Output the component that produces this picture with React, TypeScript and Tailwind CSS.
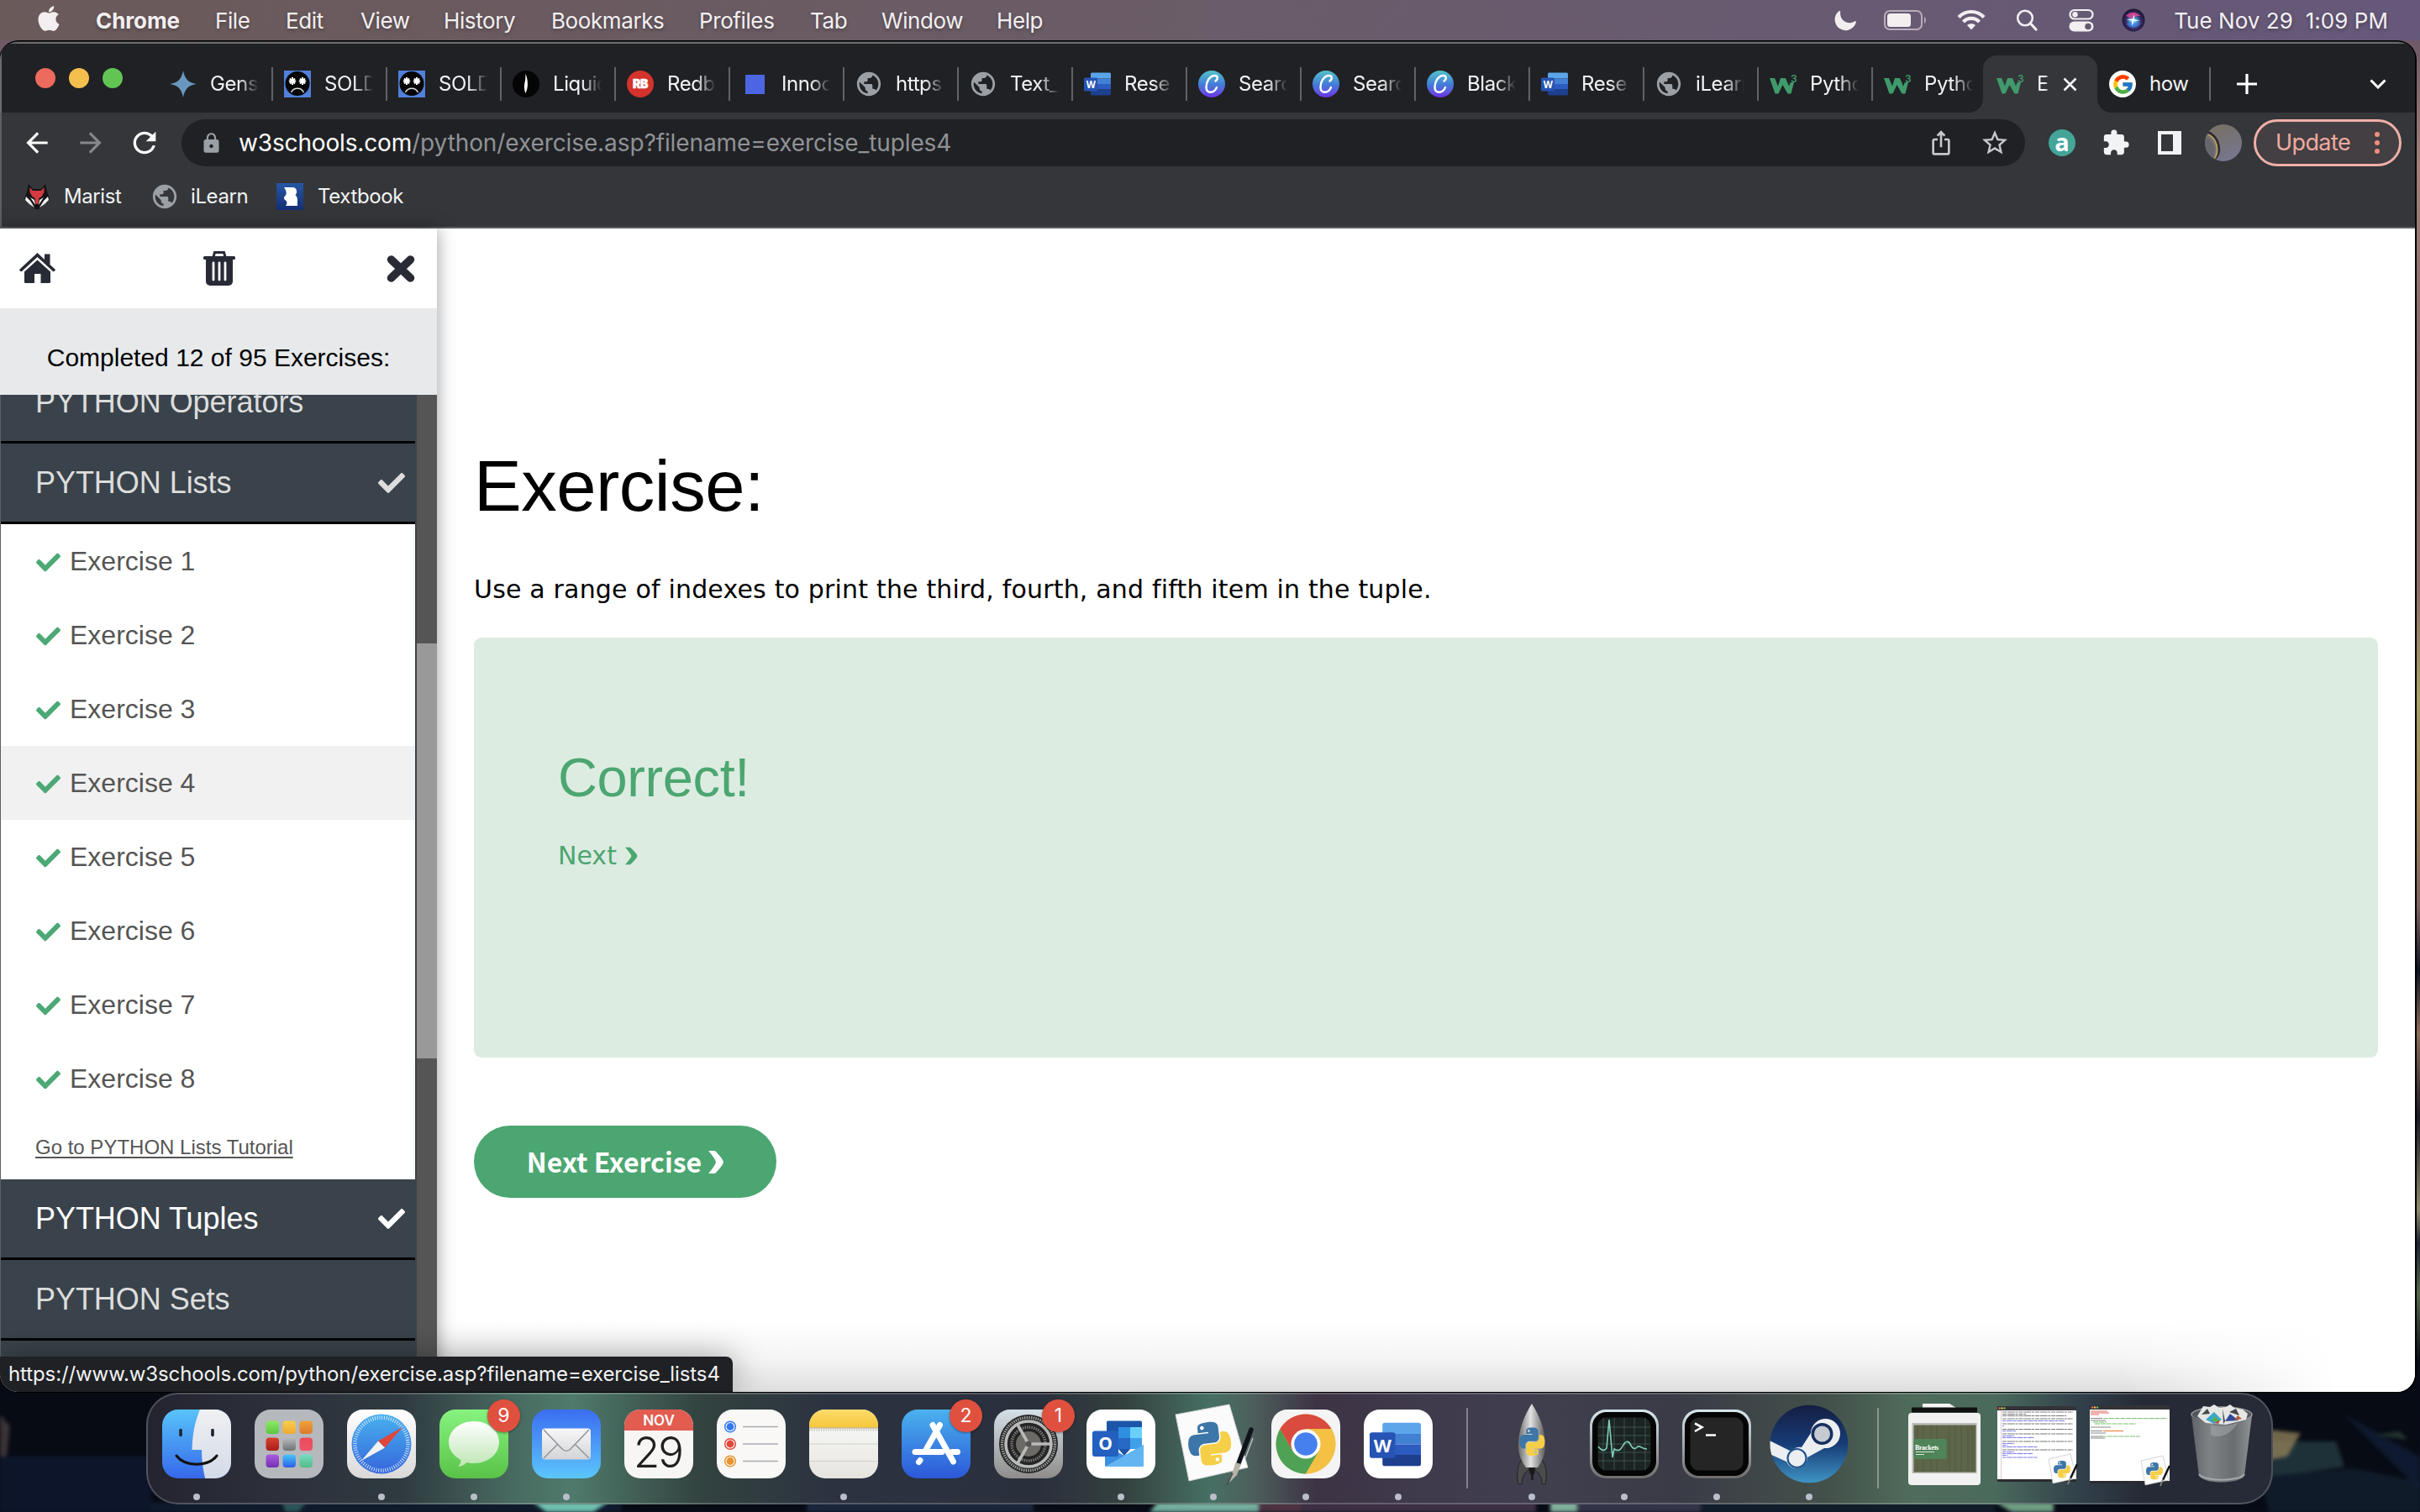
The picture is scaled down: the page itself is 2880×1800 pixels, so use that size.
import React from 'react';
import { FaApple, FaCheck } from 'react-icons/fa';
import { IoMoon } from 'react-icons/io5';
import { FcGoogle } from 'react-icons/fc';
import {
  MdArrowBack,
  MdArrowForward,
  MdExtension,
  MdIosShare,
  MdLock,
  MdPublic,
  MdRefresh,
  MdStarBorder,
} from 'react-icons/md';

/* ---------- menu bar ---------- */

const menus = [
  { label: 'File', cls: 'w-[84px]' },
  { label: 'Edit', cls: 'w-[89px]' },
  { label: 'View', cls: 'w-[99px]' },
  { label: 'History', cls: 'w-[128px]' },
  { label: 'Bookmarks', cls: 'w-[176px]' },
  { label: 'Profiles', cls: 'w-[132px]' },
  { label: 'Tab', cls: 'w-[85px]' },
  { label: 'Window', cls: 'w-[137px]' },
  { label: 'Help', cls: 'w-[80px]' },
];

function MenuBar() {
  return (
    <header className="relative flex h-12 shrink-0 items-center bg-linear-to-r from-[#6b5a5a] via-[#6a5c68] to-[#65587a] text-[26px] tracking-[-0.4px] text-[#f3eff1] [text-shadow:0_2px_4px_rgba(0,0,0,0.3)]">
      <FaApple className="ml-[41px] -mt-1 size-[34px]" />
      <span className="ml-[39px] w-[142px] font-bold tracking-[-0.1px]">Chrome</span>
      {menus.map((m) => (
        <span key={m.label} className={m.cls}>
          {m.label}
        </span>
      ))}
      <div className="ml-auto flex items-center pr-[38px]">
        <IoMoon className="size-[28px] -rotate-12" />
        <svg className="ml-[32px] h-[26px] w-[52px]" viewBox="0 0 52 26" fill="none">
          <rect x="1" y="2" width="44" height="22" rx="6" stroke="#b7aebb" strokeWidth="2" />
          <rect x="4" y="5" width="28" height="16" rx="3.5" fill="#f3eff1" />
          <path d="M48 9c2.5 1 2.5 7 0 8z" fill="#b7aebb" />
        </svg>
        <svg className="ml-[35px] h-[26px] w-[34px]" viewBox="0 0 34 26" fill="none" stroke="#f3eff1" strokeWidth="4.2">
          <path d="M2 9.500C10 .8 24 .8 32 9.500" />
          <path d="M7.500 15C12.500 9.500 21.500 9.500 26.500 15" />
          <path d="M17 24.500l-5-5.400c2.600-2.600 7.400-2.600 10 0z" fill="#f3eff1" stroke="none" />
        </svg>
        <svg className="ml-[36px] h-[26px] w-[26px]" viewBox="0 0 26 26" fill="none" stroke="#f3eff1" strokeWidth="2.600" strokeLinecap="round">
          <circle cx="11" cy="10.500" r="8.800" />
          <path d="M17.500 17l6.500 7" strokeWidth="3.200" />
        </svg>
        <svg className="ml-[37px] h-[28px] w-[30px]" viewBox="0 0 30 28" fill="none">
          <rect x="1.500" y="2" width="27" height="10.500" rx="5.250" stroke="#f3eff1" strokeWidth="2.200" />
          <circle cx="7.500" cy="7.250" r="3.200" fill="#f3eff1" />
          <rect x="0.500" y="15.500" width="29" height="12" rx="6" fill="#f3eff1" />
          <circle cx="23" cy="21.500" r="3.800" fill="#645a70" />
        </svg>
        <svg className="ml-[33px] h-[28px] w-[28px]" viewBox="0 0 28 28">
          <defs>
            <radialGradient id="siri" cx="0.5" cy="0.55" r="0.55">
              <stop offset="0" stopColor="#d8fbff" />
              <stop offset="0.25" stopColor="#4aa3d6" />
              <stop offset="0.6" stopColor="#3a2a64" />
              <stop offset="1" stopColor="#17132c" />
            </radialGradient>
          </defs>
          <circle cx="14" cy="14" r="13.500" fill="url(#siri)" />
          <path d="M5 9c4-5 13-6 17 0-5 0-8 1-9 5-2-3-5-4-8-5z" fill="#e0489a" opacity=".85" />
          <path d="M5 18c4 1 6-1 9-4 1 3 4 5 9 3-4 7-13 8-18 1z" fill="#3d7df0" opacity=".6" />
          <path d="M15 7l0 6 7 1.500-7 .5L12 21l0-6-6-2 7-.5z" fill="#e6ffff" />
        </svg>
        <span className="ml-[34px] whitespace-pre tracking-[0.05px]">Tue Nov 29  1:09 PM</span>
      </div>
    </header>
  );
}

/* ---------- favicons ---------- */

function WordMark({ className }: { className: string }) {
  return (
    <svg className={className} viewBox="0 0 32 32">
      <path d="M8 4a1.500 1.500 0 011.500-1.500h21A1.500 1.500 0 0132 4v5.500H8z" fill="#5ca5ea" />
      <path d="M8 9.500h24V16H8z" fill="#4280d4" />
      <path d="M8 16h24v6.500H8z" fill="#2c5cc0" />
      <path d="M8 22.500h24V28a1.500 1.500 0 01-1.500 1.500h-21A1.500 1.500 0 018 28z" fill="#1d3f8e" />
      <rect x="0" y="8.500" width="16" height="16" rx="1.500" fill="#2653b4" />
      <text x="8" y="20.800" textAnchor="middle" className="font-['Open_Sans'] text-[11.5px] font-bold" fill="#fff">
        W
      </text>
    </svg>
  );
}

function W3Mark() {
  return (
    <svg className="size-8" viewBox="0 0 32 32">
      <path d="M0 9h6l4 9.500L13 9h6l4 9.500 2-4.500h4l-3.500 13.500h-4L15.500 17 10.500 27.500h-4z" fill="#3f9b6b" />
      <text x="25" y="14" className="font-['Inter'] text-[12px] font-semibold" fill="#3f9b6b">
        3
      </text>
    </svg>
  );
}

function SadFace() {
  return (
    <svg className="size-8" viewBox="0 0 32 32">
      <rect width="32" height="32" fill="#5080da" />
      <circle cx="16" cy="15.500" r="14.500" fill="#050505" />
      <g stroke="#fff" strokeWidth="2">
        <path d="M10 8v9M5.800 12.500h8.400M7 9.500l6 6M13 9.500l-6 6" />
        <path d="M22 8v9M17.800 12.500h8.400M19 9.500l6 6M25 9.500l-6 6" />
      </g>
      <path d="M8.500 26c3-6.500 12-6.500 15 0" stroke="#ddd" strokeWidth="1.500" fill="none" />
    </svg>
  );
}

function CanvaMark() {
  return (
    <span className="flex size-8 items-center justify-center rounded-full bg-linear-to-b from-[#56c2c8] via-[#4478d8] via-55% to-[#6a2be6]">
      <svg className="size-8" viewBox="0 0 32 32" fill="none" stroke="#fff" strokeWidth="2.400" strokeLinecap="round">
        <path d="M20.500 12.500c3.500-2.500 3-6.500-1-6.500-5.500 0-10 7-10 13.500 0 8.500 9.500 8 12.500.5" />
      </svg>
    </span>
  );
}

function Favicon({ kind }: { kind: string }) {
  switch (kind) {
    case 'star':
      return (
        <svg className="size-8" viewBox="0 0 32 32">
          <path d="M16 0c2 10 6 14.500 16 16-10 1.500-14 6-16 16C14 22 10 17.500 0 16 10 14.500 14 10 16 0z" fill="#6a97bf" />
        </svg>
      );
    case 'sad':
      return <SadFace />;
    case 'death':
      return (
        <svg className="size-8" viewBox="0 0 32 32">
          <circle cx="16" cy="16" r="16" fill="#050506" />
          <path d="M15.500 4c3 7 3.500 16 0 23-2.500-6-1.500-11-.5-15 .5-3 .2-5 .5-8z" fill="#fff" />
        </svg>
      );
    case 'redbubble':
      return (
        <svg className="size-8" viewBox="0 0 32 32">
          <circle cx="16" cy="16" r="16" fill="#d4322c" />
          <text x="16" y="21" textAnchor="middle" className="font-['Inter'] text-[14px] font-black" fill="#fff" stroke="#fff" strokeWidth=".5">
            RB
          </text>
        </svg>
      );
    case 'square':
      return (
        <span className="flex size-8 items-center justify-center">
          <span className="size-[23px] bg-[#4c65e2]" />
        </span>
      );
    case 'globe':
      return <MdPublic className="size-[34px] -ml-px -mr-px text-[#9aa0a6]" />;
    case 'word':
      return <WordMark className="size-8" />;
    case 'canva':
      return <CanvaMark />;
    case 'google':
      return (
        <span className="flex size-8 items-center justify-center rounded-full bg-white">
          <FcGoogle className="size-[27px]" />
        </span>
      );
    default:
      return <W3Mark />;
  }
}

/* ---------- tab strip ---------- */

const tabs = [
  { icon: 'star', label: 'Gens' },
  { icon: 'sad', label: 'SOLD' },
  { icon: 'sad', label: 'SOLD' },
  { icon: 'death', label: 'Liquid' },
  { icon: 'redbubble', label: 'Redb' },
  { icon: 'square', label: 'Innoc' },
  { icon: 'globe', label: 'https' },
  { icon: 'globe', label: 'Text_' },
  { icon: 'word', label: 'Rese' },
  { icon: 'canva', label: 'Searc' },
  { icon: 'canva', label: 'Searc' },
  { icon: 'canva', label: 'Black' },
  { icon: 'word', label: 'Rese' },
  { icon: 'globe', label: 'iLearn' },
  { icon: 'w3', label: 'Pytho' },
  { icon: 'w3', label: 'Pytho' },
];

const fade = '[mask-image:linear-gradient(to_right,black_60%,transparent)]';

function TabStrip() {
  return (
    <div className="flex h-[82px] items-end bg-[#202124] text-[24px] tracking-[-0.4px] text-[#f1f3f4]">
      <div className="ml-[40px] mb-[29px] flex h-6 w-[147px] gap-4">
        <i className="size-6 rounded-full bg-[#ed6a5e]" />
        <i className="size-6 rounded-full bg-[#f4bf4f]" />
        <i className="size-6 rounded-full bg-[#61c554]" />
      </div>
      {tabs.map((t, i) => (
        <div key={i} className="flex h-[68px] w-[136px] shrink-0 items-center pl-[13px]">
          <Favicon kind={t.icon} />
          <span className={`ml-4 w-[58px] overflow-hidden whitespace-nowrap ${fade}`}>{t.label}</span>
          {i < 15 && <i className="ml-auto h-10 w-0.5 bg-[#5f6368]" />}
        </div>
      ))}
      <div className="relative -ml-[5px] flex h-[68px] w-[136px] shrink-0 items-center rounded-t-[16px] bg-[#35363a] pl-4">
        <i className="absolute -left-4 bottom-0 size-4 bg-[radial-gradient(circle_at_0_0,#202124_15.5px,#35363a_16px)]" />
        <i className="absolute -right-4 bottom-0 size-4 bg-[radial-gradient(circle_at_100%_0,#202124_15.5px,#35363a_16px)]" />
        <W3Mark />
        <span className={`ml-4 w-[16px] overflow-hidden ${fade}`}>E</span>
        <svg className="ml-[15px] size-[17px]" viewBox="0 0 17 17" stroke="#f1f3f4" strokeWidth="2.600">
          <path d="M1.500 1.500l14 14M15.500 1.500l-14 14" />
        </svg>
      </div>
      <div className="flex h-[68px] w-[135px] shrink-0 items-center pl-[14px]">
        <Favicon kind="google" />
        <span className="ml-4 w-[58px] whitespace-nowrap">how</span>
        <i className="ml-auto h-10 w-0.5 bg-[#5f6368]" />
      </div>
      <svg className="mb-[22px] ml-[31px] size-6" viewBox="0 0 24 24" stroke="#fff" strokeWidth="3.200">
        <path d="M12 0v24M0 12h24" />
      </svg>
      <svg className="mb-[28px] ml-[134px] h-[12px] w-[20px]" viewBox="0 0 20 12" stroke="#fff" strokeWidth="3" fill="none">
        <path d="M1.500 1.500L10 10l8.500-8.500" />
      </svg>
    </div>
  );
}

/* ---------- toolbar and bookmarks ---------- */

function Toolbar() {
  return (
    <div className="flex h-[72px] items-center bg-[#35363a]">
      <MdArrowBack className="ml-[23px] size-[38px] text-white" />
      <MdArrowForward className="ml-[26px] size-[38px] text-[#86888c]" />
      <MdRefresh className="ml-[25px] size-[40px] text-white" />
      <div className="ml-[24px] flex h-14 w-[2194px] shrink-0 items-center rounded-full bg-[#202124] pl-[22px] text-[28px]">
        <MdLock className="size-[27px] text-[#9aa0a6]" />
        <span className="ml-[19px] whitespace-nowrap tracking-[-0.15px] text-white">w3schools.com</span>
        <span className="whitespace-nowrap tracking-[-0.1px] text-[#8f9296]">/python/exercise.asp?filename=exercise_tuples4</span>
        <MdIosShare className="ml-auto size-[32px] text-[#c6c9cc]" />
        <MdStarBorder className="ml-[30px] mr-[18px] size-[36px] text-[#c6c9cc]" />
      </div>
      <span className="ml-[28px] flex size-8 shrink-0 items-center justify-center rounded-full bg-[#44a598] pb-1 font-['Open_Sans'] text-[29px] leading-none font-bold text-white">
        a
      </span>
      <MdExtension className="ml-[31px] size-[34px] shrink-0 text-[#f1f3f4]" />
      <svg className="ml-[33px] h-7 w-7 shrink-0" viewBox="0 0 28 28">
        <path fillRule="evenodd" d="M0 0h28v28H0zM4 4v20h14V4z" fill="#f1f3f4" />
      </svg>
      <svg className="ml-[28px] size-11 shrink-0" viewBox="0 0 44 44">
        <defs>
          <linearGradient id="av" x1="0" y1="0" x2="0.400" y2="1">
            <stop offset="0" stopColor="#77705f" />
            <stop offset="1" stopColor="#77758c" />
          </linearGradient>
          <clipPath id="avc">
            <circle cx="22" cy="22" r="22" />
          </clipPath>
        </defs>
        <g clipPath="url(#avc)">
          <rect width="44" height="44" fill="url(#av)" />
          <path d="M0 16c10 0 16 14 8 28H0z" fill="#66676c" />
          <path d="M3 9c14 6 18 24 8 33" fill="none" stroke="#2a2a32" strokeWidth="3" />
          <path d="M4 12c10 5 15 20 6 31" fill="none" stroke="#b9a05e" strokeWidth="1.800" />
        </g>
      </svg>
      <div className="ml-[14px] flex h-14 w-[176px] shrink-0 items-center rounded-full border-[3px] border-[#efb0a7] bg-[#433f42] pl-[23px] text-[27px] tracking-[-0.6px] text-[#f0aaa1]">
        <span className="w-[118px]">Update</span>
        <span className="flex flex-col gap-[4px]">
          <i className="size-[6px] rounded-full bg-[#ee8f80]" />
          <i className="size-[6px] rounded-full bg-[#ee8f80]" />
          <i className="size-[6px] rounded-full bg-[#ee8f80]" />
        </span>
      </div>
    </div>
  );
}

function Bookmarks() {
  return (
    <div className="flex h-[66px] items-center border-b-2 border-[#5c5e63] bg-[#35363a] pb-[8px] text-[24px] tracking-[-0.4px] text-[#f1f3f4]">
      <svg className="ml-[26px] h-[30px] w-8" viewBox="0 0 32 30">
        <path d="M6 0l5 6h10l5-6 2 9 3 9-6 2-3 5-4 5h-4l-4-5-3-5-6-2 3-9z" fill="#141414" />
        <path d="M3 15l5 5 5 8-6-4-5-5zM29 15l-5 5-5 8 6-4 5-5z" fill="#f5f5f5" />
        <path d="M7.500 4l3.500 4h10l3.500-4v6l-3 5-3 2-1 7h-3l-1-7-3-2-3-5z" fill="#d43a40" />
        <path d="M8 16l5 3 1 6zM24 16l-5 3-1 6z" fill="#e9e9e9" />
      </svg>
      <span className="ml-[16px] w-[103px]">Marist</span>
      <MdPublic className="size-[34px] text-[#9aa0a6]" />
      <span className="ml-[14px] w-[102px]">iLearn</span>
      <svg className="size-8" viewBox="0 0 32 32">
        <defs>
          <linearGradient id="tb" x1="0" y1="0" x2="0" y2="1">
            <stop offset="0" stopColor="#2657a4" />
            <stop offset="1" stopColor="#142f73" />
          </linearGradient>
        </defs>
        <rect width="32" height="32" fill="url(#tb)" />
        <path d="M9 5h11c5 1 5 7 2.500 9 3 3 2.500 6 2.500 13H11c2.500-3 1.500-6-1-7-1.500-2-1.500-3 .5-5 2-2 1.500-6-1.500-10z" fill="#fff" />
      </svg>
      <span className="ml-[17px]">Textbook</span>
    </div>
  );
}

/* ---------- sidebar ---------- */

const heading =
  'flex h-24 w-[493px] shrink-0 items-center justify-between border-b-[3px] border-black bg-[#3a434b] pl-[41px] pr-[12px] text-[36px] tracking-[-0.05px]';

function Sidebar() {
  return (
    <aside className="z-10 flex w-[520px] shrink-0 flex-col bg-white font-['Liberation_Sans',sans-serif] shadow-[0_0_20px_rgba(0,0,0,0.4)]">
      <div className="flex h-[95px] shrink-0 items-center justify-between bg-white pr-[26px] pb-0.5 pl-[23px]">
        <svg className="h-[36px] w-[43px]" viewBox="0 0 43 36" fill="#282a35">
          <path d="M21.500 0L30 8V1.500h6.500V14l6 5.500c1 1.500-1 3.500-2.500 2.500L21.500 5 3 22C1.500 23-.5 21 .5 19.500z" />
          <path d="M21.500 8.500L37 22.500V34.500c0 1-.6 1.500-1.500 1.500H25.500V25h-7.500v11H7.500C6.600 36 6 35.500 6 34.500V22.500z" />
        </svg>
        <svg className="-ml-[4px] h-[42px] w-[38px]" viewBox="0 0 38 42" fill="none">
          <path d="M12 8l1.500-5.500h11L26 8" stroke="#282a35" strokeWidth="3" />
          <rect x="0" y="7" width="38" height="4" rx="1.500" fill="#282a35" />
          <path d="M3 9h32v28a5 5 0 01-5 5H8a5 5 0 01-5-5z" fill="#282a35" />
          <path d="M12 15v20M19 15v20M26 15v20" stroke="#fff" strokeWidth="2.800" strokeLinecap="round" />
        </svg>
        <svg className="mt-[3px] h-[32px] w-[34px]" viewBox="0 0 34 32" stroke="#282a35" strokeWidth="9.500" strokeLinecap="round">
          <path d="M5.500 5l23 22M28.500 5l-23 22" />
        </svg>
      </div>
      <div className="flex h-[103px] shrink-0 items-center justify-center bg-[#e7e9eb] pt-[14px] text-[30px] text-black">
        Completed 12 of 95 Exercises:
      </div>
      <div className="flex min-h-0 flex-1 bg-[#3a434b]">
        <div className="flex w-[496px] flex-col overflow-hidden border-l border-[#5a6167]">
          <div className={`${heading} -mt-[38px] text-[#ddd]`}>PYTHON Operators</div>
          <div className={`${heading} text-[#ddd]`}>
            PYTHON Lists
            <FaCheck className="size-[32px]" />
          </div>
          <div className="h-[780px] w-[493px] shrink-0 bg-white text-[#555]">
            {[1, 2, 3, 4, 5, 6, 7, 8].map((n) => (
              <div
                key={n}
                className={`flex h-[88px] items-center pb-[1px] pl-[42px] text-[32px] ${n === 4 ? 'bg-[#f1f1f1]' : ''}`}
              >
                <FaCheck className="mt-1 mr-[11px] size-[29px] text-[#4ca874]" />
                Exercise {n}
              </div>
            ))}
            <div className="pt-[20px] pl-[41px] text-[24px] underline decoration-2 underline-offset-[3px]">
              Go to PYTHON Lists Tutorial
            </div>
          </div>
          <div className={`${heading} text-white`}>
            PYTHON Tuples
            <FaCheck className="size-[32px]" />
          </div>
          <div className={`${heading} text-[#ddd]`}>PYTHON Sets</div>
        </div>
        <div className="flex-1 bg-[#555] pt-[296px]">
          <div className="h-[494px] bg-[#999]" />
        </div>
      </div>
    </aside>
  );
}

/* ---------- exercise page ---------- */

function Exercise() {
  return (
    <main className="relative flex-1 bg-white pl-[44px] font-['DejaVu_Sans',sans-serif] text-black">
      <h1 className="mt-[258px] h-[98px] font-['Liberation_Sans',sans-serif] text-[85px] leading-[98px] tracking-[-0.5px]">
        Exercise:
      </h1>
      <p className="mt-[56px] h-[36px] text-[30px] leading-[36px] tracking-[0.18px] whitespace-nowrap">
        Use a range of indexes to print the third, fourth, and fifth item in the tuple.
      </p>
      <section className="mt-[39px] h-[500px] w-[2266px] rounded-[9px] bg-[#ddece1] pt-[129px] pl-[100px] text-[#4ca671]">
        <h2 className="h-[76px] font-['Liberation_Sans',sans-serif] text-[65px] leading-[76px] tracking-[-0.4px]">
          Correct!
        </h2>
        <p className="mt-[37px] flex h-[36px] items-center text-[30px] leading-[36px]">
          Next
          <svg className="ml-[10px] h-[22px] w-[15px]" viewBox="0 0 16 22" fill="currentColor">
            <path d="M0 0h6.500Q15 8 15.500 11 15 14 6.500 22H0Q7 14 8 11 7 8 0 0z" />
          </svg>
        </p>
      </section>
      <button className="mt-[81px] flex h-[86px] w-[360px] items-center justify-center rounded-full bg-[#4ca671] pb-[2px] font-['Noto_Sans_CJK_SC',sans-serif] text-[32px] font-bold text-white">
        Next Exercise
        <svg className="mt-[2px] ml-[8px] h-[27px] w-[18px]" viewBox="0 0 18 27" fill="currentColor">
          <path d="M0 0h8Q17 9 18 13.500 17 18 8 27H0Q8 18 9 13.500 8 9 0 0z" />
        </svg>
      </button>
      <div className="absolute right-0 bottom-0 left-0 h-[84px] bg-linear-to-t from-[#dedede] via-[#f4f4f4] via-45% to-transparent [mask-image:linear-gradient(to_right,black_85%,transparent_96%)]" />
    </main>
  );
}

/* ---------- dock icons ---------- */

const blueSnake =
  'M54.900 0C50.300 0 45.960.4 42.100 1.100 30.760 3.100 28.700 7.300 28.700 15v10.200h26.800v3.400H18.640c-7.800 0-14.600 4.700-16.740 13.600-2.460 10.200-2.570 16.600 0 27.300C3.800 77.400 8.300 83.100 16.100 83.100h9.200V70.900c0-8.850 7.660-16.660 16.750-16.660h26.800c7.450 0 13.400-6.140 13.400-13.600V15c0-7.270-6.130-12.700-13.400-13.940C64.250.3 59.500-.02 54.900 0zM40.400 8.200c2.770 0 5.030 2.300 5.030 5.130 0 2.800-2.260 5.100-5.030 5.100-2.780 0-5.030-2.300-5.030-5.100 0-2.830 2.250-5.130 5.030-5.130z';

function Snakes({ transform }: { transform: string }) {
  return (
    <g transform={transform}>
      <path d={blueSnake} fill="#3d76a8" />
      <path d={blueSnake} fill="#f5cf48" transform="rotate(180 55.500 56)" />
    </g>
  );
}

function Grad({ id, a, b }: { id: string; a: string; b: string }) {
  return (
    <linearGradient id={id} x1="0" y1="0" x2="0" y2="1">
      <stop offset="0" stopColor={a} />
      <stop offset="1" stopColor={b} />
    </linearGradient>
  );
}

const tile = 'size-[82px] overflow-visible';
const Base = ({ fill }: { fill: string }) => <rect width="82" height="82" rx="19" fill={fill} />;

const Finder = () => (
  <svg className={tile} viewBox="0 0 82 82">
    <defs>
      <Grad id="fi1" a="#58c4fa" b="#3668ea" />
      <Grad id="fi2" a="#f0f0f2" b="#d3dbe8" />
      <clipPath id="fic">
        <rect width="82" height="82" rx="19" />
      </clipPath>
    </defs>
    <g clipPath="url(#fic)">
      <rect width="82" height="82" fill="url(#fi1)" />
      <path d="M45 0c-6 14-9 30-9.500 48H47c0 12 1.500 22 4 34h31V0z" fill="url(#fi2)" />
    </g>
    <path d="M22 24.500v6M60 24.500v6" stroke="#1d2430" strokeWidth="3.600" strokeLinecap="round" />
    <path d="M17 55c10 13.500 38 13.500 48 0" stroke="#111" strokeWidth="3" fill="none" strokeLinecap="round" />
  </svg>
);

const padColors = [
  ['#8fe86a', '#5bc83e'],
  ['#f7cf4e', '#f0a930'],
  ['#f0a23a', '#dd7a2c'],
  ['#d9402f', '#a81f1a'],
  ['#b7bcc0', '#6f7375'],
  ['#ea4a5b', '#ef5468'],
  ['#a95ce0', '#7430b0'],
  ['#49c6fb', '#2b5de8'],
  ['#76dcc4', '#55bb85'],
];

const Launchpad = () => (
  <svg className={tile} viewBox="0 0 82 82">
    <Base fill="#b5b8bc" />
    {padColors.map(([a, b], i) => (
      <g key={i}>
        <defs>
          <Grad id={`lp${i}`} a={a} b={b} />
        </defs>
        <rect x={13.500 + (i % 3) * 20} y={13.500 + Math.floor(i / 3) * 20} width="15.500" height="15.500" rx="4" fill={`url(#lp${i})`} />
      </g>
    ))}
  </svg>
);

const Safari = () => (
  <svg className={tile} viewBox="0 0 82 82">
    <defs>
      <Grad id="sa1" a="#ffffff" b="#d9d9da" />
      <Grad id="sa2" a="#48b0ee" b="#3566dc" />
    </defs>
    <Base fill="url(#sa1)" />
    <circle cx="41" cy="41" r="35.500" fill="url(#sa2)" />
    <circle cx="41" cy="41" r="31.500" fill="none" stroke="#dcecff" strokeWidth="4.500" strokeDasharray=".9 1.850" />
    <path d="M66 21L37 37.500l8 8z" fill="#e2453a" />
    <path d="M17 61l20-23.500 8 8z" fill="#f3f3f5" />
  </svg>
);

const Messages = () => (
  <svg className={tile} viewBox="0 0 82 82">
    <defs>
      <Grad id="ms1" a="#87f380" b="#5ac248" />
      <Grad id="ms2" a="#ffffff" b="#bfe6b4" />
    </defs>
    <Base fill="url(#ms1)" />
    <path d="M41 14c17 0 30 11 30 25S58 64 41 64c-3 0-6-.3-8.500-1-2 2.500-6 4.700-10.500 5 2.500-2.500 3.500-5 3.500-8C16.500 55 11 48 11 39c0-14 13-25 30-25z" fill="url(#ms2)" />
  </svg>
);

const Mail = () => (
  <svg className={tile} viewBox="0 0 82 82">
    <defs>
      <Grad id="ma1" a="#3b6df0" b="#5cc6fb" />
      <Grad id="ma2" a="#f8f8f8" b="#d3d4d7" />
    </defs>
    <Base fill="url(#ma1)" />
    <rect x="12" y="22.500" width="58" height="37" rx="3.500" fill="url(#ma2)" />
    <path d="M14 58l17-17M68 58L51 41M14 24l22 23c3 3 7 3 10 0l22-23" fill="none" stroke="#8d9097" strokeWidth="1.400" />
  </svg>
);

const Calendar = () => (
  <svg className={tile} viewBox="0 0 82 82">
    <Base fill="#f8f6f4" />
    <path d="M0 19A19 19 0 0119 0h44a19 19 0 0119 19v6H0z" fill="#e25c50" />
    <text x="41" y="19" textAnchor="middle" className="font-['Inter'] text-[17px] font-semibold" fill="#fff">
      NOV
    </text>
    <text x="40" y="69" textAnchor="middle" className="font-['Inter'] text-[51px] font-light tracking-[-2px]" fill="#1f1f1f">
      29
    </text>
  </svg>
);

const Reminders = () => (
  <svg className={tile} viewBox="0 0 82 82">
    <Base fill="#f9f8f6" />
    {['#3478f6', '#e2483c', '#e8932e'].map((c, i) => (
      <g key={c} transform={`translate(16 ${20.500 + i * 20.500})`}>
        <circle r="6.300" fill="none" stroke={c} strokeWidth="1.500" />
        <circle r="4.400" fill={c} />
        <path d="M15 0h42" stroke="#a9abb0" strokeWidth="1.300" />
      </g>
    ))}
  </svg>
);

const Notes = () => (
  <svg className={tile} viewBox="0 0 82 82">
    <defs>
      <Grad id="no1" a="#fbdc6a" b="#f6c63b" />
      <Grad id="no2" a="#fcfcfb" b="#e5e4df" />
    </defs>
    <Base fill="url(#no2)" />
    <path d="M0 19A19 19 0 0119 0h44a19 19 0 0119 19v2.500H0z" fill="url(#no1)" />
    <path d="M0 22h82" stroke="#a79a78" />
    <path d="M0 24.500h82" stroke="#bdbcb8" strokeWidth="2" strokeDasharray="1.300 1.500" />
    <path d="M0 41h82M0 61.500h82" stroke="#cfcfcc" strokeWidth="1.200" />
  </svg>
);

const AppStore = () => (
  <svg className={tile} viewBox="0 0 82 82">
    <defs>
      <Grad id="as1" a="#4bb2ee" b="#2b58d8" />
    </defs>
    <Base fill="url(#as1)" />
    <g stroke="#fff" strokeWidth="7" strokeLinecap="round">
      <path d="M45.500 18.500L29 48" />
      <path d="M37 18.500L61.500 62" />
      <path d="M16 50.500h32M60 50.500h6.500" />
      <path d="M22 60.500l-1.500 2" />
    </g>
  </svg>
);

const Settings = () => (
  <svg className={tile} viewBox="0 0 82 82">
    <defs>
      <Grad id="se1" a="#d5e0e8" b="#8f8d8b" />
    </defs>
    <Base fill="url(#se1)" />
    <circle cx="41" cy="41" r="35" fill="#232424" />
    <circle cx="41" cy="41" r="31.500" fill="none" stroke="#9b9c9c" strokeWidth="3.500" strokeDasharray="1.500 1.200" />
    <circle cx="41" cy="41" r="27" fill="none" stroke="#b9bab9" strokeWidth="3.600" />
    <circle cx="41" cy="41" r="20" fill="none" stroke="#757573" strokeWidth="3.500" strokeDasharray="1.500 1.200" />
    <circle cx="41" cy="41" r="16" fill="#6c6a66" stroke="#222" strokeWidth="2" />
    <path d="M41 41h26M41 41L28 18M41 41L28 64" stroke="#b9bab9" strokeWidth="3.600" />
    <circle cx="41" cy="41" r="3.500" fill="#555" />
  </svg>
);

const Outlook = () => (
  <svg className={tile} viewBox="0 0 82 82">
    <Base fill="#fff" />
    <path d="M24 15a1.500 1.500 0 011.500-1.500h39A1.500 1.500 0 0166 15v22H24z" fill="#1b55a8" />
    <path d="M38 21h14v13H38z" fill="#2f8fe0" />
    <path d="M52 21h14v13H52z" fill="#6ad0fb" />
    <path d="M38 34h14v13H38z" fill="#2769c4" />
    <path d="M52 34h14v13H52z" fill="#3f9fe8" />
    <path d="M22 42l23 13 23-13v24a2 2 0 01-2 2H24a2 2 0 01-2-2z" fill="#3a8fe0" />
    <path d="M22 68l46-26v24a2 2 0 01-2 2z" fill="#62b5f0" />
    <path d="M38 47h14l-7 8z" fill="#1d55a6" />
    <rect x="7" y="25.500" width="31" height="30.500" rx="3" fill="#2360bf" />
    <text x="22.500" y="48" textAnchor="middle" className="font-['Open_Sans'] text-[21px] font-bold" fill="#fff">
      O
    </text>
  </svg>
);

const Idle = () => (
  <svg className={tile} viewBox="0 0 82 82">
    <path d="M-4 6L60-6l22 75-70 16z" fill="#fbfbfb" stroke="#cfcfcf" />
    <g transform="rotate(-7 36 40)">
      <Snakes transform="translate(11 15) scale(.46)" />
    </g>
    <path d="M86 24L71 64" stroke="#10131c" strokeWidth="5.500" strokeLinecap="round" />
    <path d="M88 34l-9 24" stroke="#b9bcc0" strokeWidth="1.500" />
    <path d="M67.500 63l6.500 2-5 13-9 9z" fill="#b5b2a8" />
    <path d="M64 76l-7 14" stroke="#4a4a48" strokeWidth="1.200" />
  </svg>
);

const Chrome = () => (
  <svg className={tile} viewBox="0 0 82 82">
    <Base fill="#f4f4f4" />
    <circle cx="41" cy="41" r="35.500" fill="#f4c145" />
    <path d="M10.300 23.200A35.500 35.500 0 0171.700 23.200H41L25.600 50z" fill="#d84b3e" />
    <path d="M10.300 23.200L25.600 50 56.400 50 41 76.500A35.500 35.500 0 0110.300 23.200z" fill="#4fa155" />
    <path d="M71.700 23.200H41L56.400 50 41 76.500A35.500 35.500 0 0071.700 23.200z" fill="#f4c145" />
    <circle cx="41" cy="41" r="17.500" fill="#fff" />
    <circle cx="41" cy="41" r="13.800" fill="#4680ee" />
  </svg>
);

const Word = () => (
  <div className="flex size-[82px] items-center rounded-[19px] bg-white pl-[7px]">
    <WordMark className="size-[61px]" />
  </div>
);

const Rocket = () => (
  <svg className={tile} viewBox="0 0 82 82">
    <defs>
      <linearGradient id="ro1" x1="0" x2="1">
        <stop offset="0" stopColor="#6a6a6a" />
        <stop offset="0.45" stopColor="#e2e2e2" />
        <stop offset="1" stopColor="#5b5b5b" />
      </linearGradient>
    </defs>
    <path d="M29 60c-6 7-6 20-4 29h4c0-8 3-13 8-17l8 0c5 4 8 9 8 17h4c2-9 2-22-4-29z" fill="#4b4b4b" stroke="#222" />
    <path d="M37 69h8l-1 8h-1l-.5 7h-2L40 77h-1z" fill="#191919" />
    <path d="M41-7c10 16 16 32 16 50 0 11-4 19-9 26H34c-5-7-9-15-9-26C25 25 31 9 41-7z" fill="url(#ro1)" />
    <Snakes transform="translate(26.500 21.500) scale(.27 .3)" />
  </svg>
);

const Activity = () => (
  <svg className={tile} viewBox="0 0 82 82">
    <defs>
      <Grad id="ac1" a="#d7e6ee" b="#6f6d6c" />
    </defs>
    <Base fill="url(#ac1)" />
    <rect x="3" y="3" width="76" height="76" rx="17" fill="#050505" />
    <rect x="9.500" y="9.500" width="63" height="63" rx="10" fill="#1c2423" />
    <path d="M16 10v62M29 10v62M41 10v62M53 10v62M66 10v62M10 21h62M10 31h62M10 41h62M10 51h62M10 61h62" stroke="#3f5850" strokeWidth=".9" />
    <path d="M10 44c4 5 7 6 10 2l3-34 4 45 2-10c6 4 8 0 11-5 4-6 7-4 9 1 4 6 6 3 8 1 4-1 5 3 11 3" fill="none" stroke="#7fcdb9" strokeWidth="1.600" />
  </svg>
);

const Terminal = () => (
  <svg className={tile} viewBox="0 0 82 82">
    <defs>
      <Grad id="te1" a="#d7e6ee" b="#6f6d6c" />
    </defs>
    <Base fill="url(#te1)" />
    <rect x="3" y="3" width="76" height="76" rx="17" fill="#050505" />
    <rect x="9.500" y="9.500" width="63" height="63" rx="10" fill="#252525" />
    <path d="M15 16.500l8.500 4.500-8.500 5M28 30.500h12" fill="none" stroke="#fff" strokeWidth="2.600" />
  </svg>
);

const Steam = () => (
  <svg className={tile} viewBox="0 0 82 82">
    <defs>
      <linearGradient id="st1" x1="0" y1="0" x2="0" y2="1">
        <stop offset="0" stopColor="#141e42" />
        <stop offset="0.5" stopColor="#173c76" />
        <stop offset="1" stopColor="#3f94c4" />
      </linearGradient>
      <clipPath id="stc">
        <circle cx="41" cy="41" r="46.500" />
      </clipPath>
    </defs>
    <g clipPath="url(#stc)">
      <circle cx="41" cy="41" r="46.500" fill="url(#st1)" />
      <path d="M-8 36L20 50a13 13 0 0112-5l11-17a17.500 17.500 0 1116 18L39 57a13 13 0 01-25 5L-8 52z" fill="#eceef1" />
      <circle cx="56.500" cy="29" r="13" fill="#16305f" />
      <circle cx="56.500" cy="29" r="9.500" fill="#c6cbd2" />
      <circle cx="26.500" cy="58" r="11" fill="none" stroke="#22558f" strokeWidth="2.200" />
    </g>
  </svg>
);

const Brackets = () => (
  <svg className="h-[98px] w-[86px] overflow-visible" viewBox="0 0 86 98">
    <path d="M17 8V1h32l8 5v3z" fill="#f4f4f4" />
    <rect x="4" y="5.500" width="78" height="6" fill="#111" />
    <rect x="0" y="12" width="86" height="86" rx="4" fill="#f1f1f1" />
    <rect x="4.500" y="24" width="77" height="60" fill="#bcbdb8" />
    <rect x="6.500" y="26.500" width="74" height="56" fill="#5e6649" />
    <path d="M11 27v55M18 27v55M27 27v55M34 27v55M49 27v55M56 27v55M63 27v55M71 27v55M76 27v55" stroke="#535b40" />
    <rect x="6.500" y="43" width="39" height="24" fill="#4f8358" />
    <text x="8" y="55.500" className="font-['Liberation_Serif'] text-[8px] font-bold tracking-[-0.3px]" fill="#fff">
      Brackets
    </text>
    <path d="M9 58.500h22M9 61.500h10" stroke="#d5e5d5" strokeWidth="1" />
  </svg>
);

function MiniIdle({ x, y }: { x: number; y: number }) {
  return (
    <g transform={`translate(${x} ${y})`}>
      <path d="M0 6L26 0l7 29-28 6z" fill="#fdfdfd" stroke="#bbb" strokeWidth=".6" />
      <Snakes transform="translate(6 8) scale(.18)" />
      <path d="M34 12l-8 17" stroke="#111" strokeWidth="2.500" />
      <path d="M26 28l-3 8" stroke="#8d8d88" strokeWidth="1.600" />
    </g>
  );
}

const Shell = () => (
  <svg className="h-[90px] w-[94px] overflow-visible" viewBox="0 0 94 90">
    <rect width="94" height="90" fill="#fff" />
    <rect width="94" height="5" fill="#333338" />
    <rect y="87" width="94" height="3" fill="#2b2b2f" />
    <circle cx="2.500" cy="2.500" r="1.200" fill="#ed6a5e" />
    <circle cx="5.500" cy="2.500" r="1.200" fill="#f4bf4f" />
    <circle cx="8.500" cy="2.500" r="1.200" fill="#61c554" />
    <path d="M4.500 5v82" stroke="#c9a9a9" strokeWidth=".6" />
    <path d="M6 7h84M6 9.500h28M6 11.500h76M6 15h84M6 21h84M6 27.500h84M6 33h84M6 42h84M6 52h84" stroke="#777" strokeWidth="1" strokeDasharray="5 .8 9 .7 3 .9" />
    <path d="M6 17.500h74M6 23.500h2M6 29.500h16M6 35.500h14M6 37.500h38M6 44.500h14M6 46.500h6M6 48.500h42M6 54.500h14M6 56.500h36M6 58.500h6M6 61h42" stroke="#7a7aec" strokeWidth="1.200" strokeDasharray="4 .8 7 .7" />
    <MiniIdle x={61} y={57} />
  </svg>
);

const Script = () => (
  <svg className="h-[93px] w-[95px] overflow-visible" viewBox="0 0 95 93">
    <rect width="95" height="93" fill="#fff" />
    <rect width="95" height="5" fill="#333338" />
    <rect y="90" width="95" height="3" fill="#2b2b2f" />
    <circle cx="3" cy="2.500" r="1.200" fill="#ed6a5e" />
    <circle cx="6" cy="2.500" r="1.200" fill="#f4bf4f" />
    <circle cx="9" cy="2.500" r="1.200" fill="#61c554" />
    <path d="M1 7h20M1 9h22M1 11h10" stroke="#e0675f" strokeWidth="1.200" />
    <path d="M16 15.500h76M4 20h16M6 22h49" stroke="#7cc472" strokeWidth="1.200" strokeDasharray="6 .8" />
    <path d="M1 15.500h14M1 18h18M1 26h24M1 30.500h14M1 33h18M1 37h14M1 39h17" stroke="#888" strokeWidth="1.100" />
    <path d="M16 30.500h24" stroke="#e08a3e" strokeWidth="1.200" />
    <path d="M14 37h46" stroke="#7cc472" strokeWidth="1.200" strokeDasharray="6 .8" />
    <MiniIdle x={61} y={60} />
  </svg>
);

const Trash = () => (
  <svg className="h-[94px] w-[74px] overflow-visible" viewBox="0 0 74 94">
    <defs>
      <linearGradient id="tr1" x1="0" x2="1">
        <stop offset="0" stopColor="#5f6368" />
        <stop offset="0.3" stopColor="#808386" />
        <stop offset="0.7" stopColor="#6a6d70" />
        <stop offset="1" stopColor="#909396" />
      </linearGradient>
    </defs>
    <ellipse cx="37" cy="12" rx="36" ry="9" fill="#53575c" stroke="#9fa2a5" strokeWidth="1.500" />
    <path d="M1 13c12 10 60 10 72 0l-9 72c-6 10-48 10-54 0z" fill="url(#tr1)" />
    <path d="M8 14L15 2l8 1 5-3 6 4 8-1 5-3 5 4 10 2 6 5-2 7-24 6-24-2z" fill="#e6e6e4" />
    <path d="M18 18l10-9 9 9-9 5z" fill="#3aa7c9" />
    <path d="M25 20l4-6 6 6z" fill="#5fae4a" />
    <path d="M28 22l7-3-2 4z" fill="#c4443c" />
    <path d="M41 20l6-9 10 8z" fill="#2f4a9c" />
    <path d="M46 9l8-4 4 8zM13 12l7-7 3 6zM38 5l3 15-2 3z" fill="#44474c" />
    <path d="M52 19l4-6 5 4z" fill="#b85a34" />
    <path d="M24 24c8 3 20 2 32-2-6 12-22 20-32 14z" fill="#b0b3b5" opacity=".45" />
    <path d="M10 83c6 9 48 9 54 0" fill="none" stroke="#a6a9ab" strokeWidth="2" />
  </svg>
);

type DockItem = { icon: React.ReactNode; dot?: boolean; badge?: string };

const apps: DockItem[] = [
  { icon: <Finder />, dot: true },
  { icon: <Launchpad /> },
  { icon: <Safari />, dot: true },
  { icon: <Messages />, dot: true, badge: '9' },
  { icon: <Mail />, dot: true },
  { icon: <Calendar /> },
  { icon: <Reminders /> },
  { icon: <Notes />, dot: true },
  { icon: <AppStore />, badge: '2' },
  { icon: <Settings />, badge: '1' },
  { icon: <Outlook />, dot: true },
  { icon: <Idle />, dot: true },
  { icon: <Chrome />, dot: true },
  { icon: <Word />, dot: true },
];
const running: DockItem[] = [
  { icon: <Rocket />, dot: true },
  { icon: <Activity />, dot: true },
  { icon: <Terminal />, dot: true },
  { icon: <Steam />, dot: true },
];
const files: DockItem[] = [{ icon: <Brackets /> }, { icon: <Shell /> }, { icon: <Script /> }, { icon: <Trash /> }];

function Slot({ item }: { item: DockItem }) {
  return (
    <div className="relative flex w-[110px] flex-col items-center">
      <div className="mt-[9px] flex h-[100px] items-center">{item.icon}</div>
      {item.dot && <i className="mt-[9px] size-2 rounded-full bg-[#b9bec8]" />}
      {item.badge && (
        <span className="absolute top-[6px] right-0 flex size-[39px] items-center justify-center rounded-full bg-[#e0503f] text-[23px] text-white shadow-[0_1px_3px_rgba(0,0,0,0.4)]">
          {item.badge}
        </span>
      )}
    </div>
  );
}

function Dock() {
  return (
    <nav className="ml-[174px] flex h-[133px] w-[2531px] rounded-[38px] border-2 border-white/20 bg-[linear-gradient(to_right,#23242f_0%,#2d303b_6%,#2f3a40_12%,#47695f_17%,#4f7a6c_20%,#33433f_26%,#2c3340_32%,#2a2f3c_42%,#34413f_46%,#467064_50%,#4d5f5c_52%,#3d3344_55%,#3f3a4c_60%,#403f4e_66%,#3a3b46_72%,#43504a_79%,#4f6c5b_83%,#4a6a5c_87%,#31404a_91%,#252a36_94%,#262b37_100%)] pl-[3px]">
      {apps.map((a, i) => (
        <Slot key={i} item={a} />
      ))}
      <div className="w-[49px] pt-[16px] pl-[26px]">
        <div className="h-[96px] w-0.5 bg-white/35" />
      </div>
      {running.map((a, i) => (
        <Slot key={i} item={a} />
      ))}
      <div className="w-[51px] pt-[16px] pl-[26px]">
        <div className="h-[96px] w-0.5 bg-white/35" />
      </div>
      {files.map((a, i) => (
        <Slot key={i} item={a} />
      ))}
    </nav>
  );
}

/* ---------- desktop ---------- */

function Wallpaper() {
  return (
    <div className="absolute inset-0 bg-[linear-gradient(to_bottom,#5d4c60_0,#a27f78_200px,#8a6a6c_400px,#8c6a68_700px,#a8a268_830px,#a2855a_960px,#7c6060_1080px,#0e1220_1155px,#8c6d5a_1230px,#1a1824_1330px,#8d8a6c_1440px,#1c2230_1480px,#56664c_1540px,#080b14_1620px,#0b1220_1800px)]">
      <svg className="absolute bottom-0 left-0 h-[146px] w-full blur-[2px]" viewBox="0 0 2880 146" preserveAspectRatio="none">
        <rect width="2880" height="146" fill="#070b14" />
        <path d="M0 80h180v66H0z" fill="#0c152a" />
        <path d="M0 30l12 14-4 36H0z" fill="#3a3236" />
        <path d="M180 134h560v12H180z" fill="#101a2d" />
        <path d="M335 134h30l-10 12h-15z" fill="#2c5558" />
        <path d="M634 134h90l-18 12h-56z" fill="#6fbfb0" />
        <path d="M960 134h270v12H960z" fill="#1a263c" />
        <path d="M1378 134h120v12h-130z" fill="#72ad9d" />
        <path d="M1498 134h50v12h-50z" fill="#4e3442" />
        <path d="M1548 134h280v12h-280z" fill="#3e3044" />
        <path d="M1845 134h32v12h-32z" fill="#7fb09b" />
        <path d="M1877 134h147v12h-147z" fill="#35354a" />
        <path d="M2024 134h350v12h-350z" fill="#121d2b" />
        <path d="M2374 134h70v12h-50z" fill="#6e9c80" />
        <path d="M2700 62h80l10 30-90 14z" fill="#1f3138" />
        <path d="M2700 48l38 4-16 28-22 4z" fill="#8d7d58" opacity=".8" />
        <path d="M2690 104l110-10 80 16v36h-180z" fill="#101b2a" />
        <path d="M2790 30l90 50v40z" fill="#12203a" opacity=".7" />
        <path d="M2826 54l30-4 10 10z" fill="#2d4638" opacity=".7" />
      </svg>
    </div>
  );
}

export default function App() {
  return (
    <div className="relative flex h-[1800px] w-[2880px] flex-col overflow-hidden bg-[#0a0e18] font-['Inter',sans-serif]">
      <Wallpaper />
      <MenuBar />
      <div className="relative mt-px flex h-[1608px] w-[2875px] shrink-0 flex-col overflow-hidden rounded-[22px] border-r border-black bg-[#202124] pt-px shadow-[0_0_0_1px_#000]">
        <div className="shrink-0 rounded-t-[20px] border-t-2 border-l-2 border-[#6a6c70]">
          <TabStrip />
        </div>
        <div className="shrink-0 border-l-2 border-[#5c5e63]">
          <Toolbar />
          <Bookmarks />
        </div>
        <div className="flex min-h-0 flex-1 bg-white">
          <Sidebar />
          <Exercise />
        </div>
        <div className="absolute bottom-0 left-0 z-20 flex h-[42px] w-[872px] items-center rounded-tr-[8px] bg-[#202124] pl-[10px] text-[24px] tracking-[-0.1px] whitespace-nowrap text-[#f1f3f4] shadow-[0_0_40px_rgba(0,0,0,0.35)]">
          https://www.w3schools.com/python/exercise.asp?filename=exercise_lists4
        </div>
      </div>
      <div className="relative mt-px">
        <Dock />
      </div>
    </div>
  );
}
